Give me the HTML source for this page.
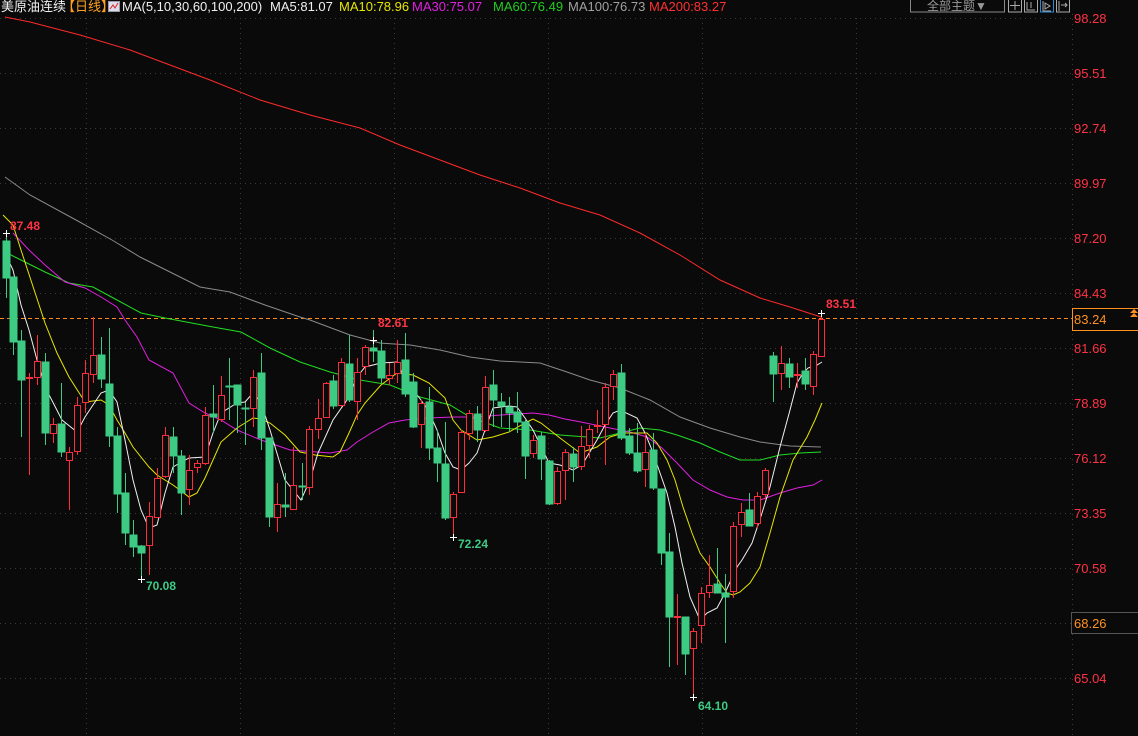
<!DOCTYPE html>
<html><head><meta charset="utf-8"><style>
html,body{margin:0;padding:0;background:#0a0a0a;width:1138px;height:736px;overflow:hidden}
svg{display:block}
text{font-family:"Liberation Sans","Noto Sans CJK SC",sans-serif}
</style></head><body>
<svg width="1138" height="736" viewBox="0 0 1138 736" xmlns="http://www.w3.org/2000/svg">
<rect width="1138" height="736" fill="#0a0a0a"/>
<g stroke="#3a3a3a" stroke-width="1" stroke-dasharray="1,4">
<path d="M0 18.5H1072M0 73.5H1072M0 128.5H1072M0 183.5H1072M0 238.5H1072M0 293.5H1072M0 348.5H1072M0 403.5H1072M0 458.5H1072M0 513.5H1072M0 568.5H1072M0 623.5H1072M0 678.5H1072"/>
<path d="M86.5 18V736M240.5 18V736M394.5 18V736M548.5 18V736M702.5 18V736M856.5 18V736M1072.5 14V736"/>
</g>
<path d="M0 318.5H1072" stroke="#ff8c1a" stroke-dasharray="4,3"/>
<g fill="none" stroke-width="1">
<polyline stroke="#ff2a2a" points="5,17 30,22 80,35 130,50 170,65 210,80 260,100 310,115 360,128 400,145 440,160 480,175 520,188 560,203 600,215 640,233 680,255 720,280 760,298 790,307 821,317"/>
<polyline stroke="#8a8a8a" points="5,177 30,195 76,220 112,240 140,257 170,272 200,287 230,292 265,305 300,317 310,320 350,335 380,343 410,345 440,350 470,357 500,361 540,363 567,372 590,380 620,388 650,400 680,417 710,428 740,437 760,442 790,446 821,447"/>
<polyline stroke="#22dd22" points="5,252 21,260 45,272 69,283 93,287 117,300 141,313 165,318 213,327 241,332 270,348 300,362 330,372 360,380 390,385 420,397 450,405 470,417 500,428 530,430 560,435 600,438 640,428 660,430 677,435 700,443 720,452 740,460 760,460 780,455 800,453 821,452"/>
<polyline stroke="#e020e0" points="13,233 29,250 45,265 65,282 85,288 101,297 117,307 125,320 137,337 149,360 173,373 189,403 205,413 221,420 237,430 261,440 290,450 330,453 347,450 357,442 373,432 389,423 405,420 429,418 453,417 477,417 501,415 517,414 533,413 549,415 565,419 581,422 605,427 630,432 647,437 662,448 677,463 693,480 710,490 727,497 743,500 760,500 780,493 797,488 813,485 822,480"/>
<polyline stroke="#e6e600" points="3,215 13,225 21,250 45,323 57,353 69,377 85,402 101,400 109,405 117,420 125,433 133,447 149,467 157,475 173,485 189,497 197,493 205,478 213,460 221,442 237,428 245,423 253,418 261,419 270,423 285,435 300,452 315,455 333,457 340,452 349,433 357,415 365,403 381,385 397,373 413,375 429,383 445,398 453,420 461,430 477,440 493,437 509,432 525,423 533,419 541,423 560,438 580,453 597,447 610,437 623,433 647,433 657,443 667,460 675,480 683,507 692,533 700,553 710,567 720,583 727,593 733,595 740,592 750,583 760,567 770,533 780,497 793,460 807,437 815,420 822,403"/>
<polyline stroke="#f0f0f0" points="5,253 13,270 21,305 29,330 37,360 45,387 62,420 77,432 85,417 101,393 109,390 117,402 125,440 133,480 141,510 149,528 157,525 165,493 173,467 189,458 205,457 213,433 221,413 237,403 245,402 253,393 261,403 270,430 285,480 301,500 310,480 318,453 333,420 349,397 357,377 365,367 381,363 397,362 405,380 413,390 421,400 429,412 437,430 445,453 453,467 461,470 469,463 477,453 485,430 493,408 509,406 517,407 525,418 533,430 549,463 560,465 573,470 582,465 597,440 605,425 613,413 620,410 637,418 645,433 652,450 660,473 667,493 675,527 682,563 690,597 700,620 707,613 717,608 725,593 737,567 742,560 752,543 762,513 770,487 780,447 790,410 797,383 803,373 808,368 817,365 822,362"/>
</g>
<g fill="#3dcb84" stroke="#3dcb84">
<path fill="none" d="M6.5 233V298M13.5 277V355M21.5 330V437M45.5 353V445M61.5 383V457M101.5 337V388M109.5 328V447M117.5 427V513M125.5 473V545M133.5 520V557M141.5 545V579M173.5 427V473M181.5 450V515M213.5 385V433M229.5 358V420M237.5 385V433M245.5 402V445M261.5 353V450M269.5 438V527M285.5 473V517M302.5 463V500M333.5 375V409M349.5 335V402M373.5 330V362M381.5 340V383M405.5 333V397M413.5 373V428M429.5 387V460M437.5 430V482M445.5 422V520M477.5 406V442M493.5 370V427M501.5 393V427M509.5 397V432M517.5 392V433M525.5 420V479M541.5 432V480M549.5 460V505M573.5 447V482M621.5 364V440M629.5 428V455M637.5 423V473M653.5 433V490M661.5 489V565M669.5 533V667M685.5 617V675M717.5 548V593M725.5 574V643M749.5 493V526M773.5 352V402M789.5 358V388M805.5 358V390"/>
<rect x="3" y="241" width="7" height="37"/><rect x="10" y="277" width="7" height="65"/><rect x="18" y="341" width="7" height="39"/><rect x="42" y="362" width="7" height="71"/><rect x="58" y="424" width="7" height="28"/><rect x="98" y="355" width="7" height="24"/><rect x="106" y="384" width="7" height="52"/><rect x="114" y="436" width="7" height="58"/><rect x="122" y="493" width="7" height="40"/><rect x="130" y="535" width="7" height="12"/><rect x="138" y="546" width="7" height="7"/><rect x="170" y="437" width="7" height="19"/><rect x="178" y="456" width="7" height="37"/><rect x="210" y="414" width="7" height="3"/><rect x="226" y="386" width="7" height="1"/><rect x="234" y="385" width="7" height="20"/><rect x="242" y="408" width="7" height="1"/><rect x="258" y="373" width="7" height="65"/><rect x="266" y="438" width="7" height="79"/><rect x="282" y="505" width="7" height="2"/><rect x="299" y="486" width="7" height="1"/><rect x="330" y="381" width="7" height="25"/><rect x="346" y="364" width="7" height="36"/><rect x="370" y="348" width="7" height="3"/><rect x="378" y="351" width="7" height="27"/><rect x="402" y="360" width="7" height="34"/><rect x="410" y="382" width="7" height="45"/><rect x="426" y="402" width="7" height="46"/><rect x="434" y="448" width="7" height="15"/><rect x="442" y="464" width="7" height="54"/><rect x="474" y="414" width="7" height="16"/><rect x="490" y="385" width="7" height="15"/><rect x="498" y="402" width="7" height="4"/><rect x="506" y="407" width="7" height="6"/><rect x="514" y="412" width="7" height="10"/><rect x="522" y="422" width="7" height="34"/><rect x="538" y="436" width="7" height="23"/><rect x="546" y="461" width="7" height="43"/><rect x="570" y="454" width="7" height="13"/><rect x="618" y="373" width="7" height="65"/><rect x="626" y="436" width="7" height="17"/><rect x="634" y="453" width="7" height="18"/><rect x="650" y="450" width="7" height="38"/><rect x="658" y="489" width="7" height="64"/><rect x="666" y="552" width="7" height="65"/><rect x="682" y="617" width="7" height="37"/><rect x="714" y="584" width="7" height="9"/><rect x="722" y="593" width="7" height="4"/><rect x="746" y="510" width="7" height="16"/><rect x="770" y="356" width="7" height="18"/><rect x="786" y="364" width="7" height="13"/><rect x="802" y="371" width="7" height="13"/>
</g>
<g fill="#0a0a0a" stroke="#ff2d3c">
<path fill="none" d="M29.5 373V475M37.5 335V385M53.5 418V443M69.5 447V510M77.5 397V455M85.5 360V413M93.5 317V383M149.5 502V575M157.5 468V518M165.5 427V478M189.5 455V505M197.5 460V473M205.5 407V465M221.5 376V422M253.5 370V427M277.5 483V532M293.5 447V510M309.5 426V495M318.5 399V439M326.5 382V418M341.5 358V407M357.5 358V420M365.5 345V375M389.5 363V385M397.5 340V383M421.5 400V448M453.5 492V537M461.5 430V493M469.5 410V440M485.5 376V432M533.5 435V458M557.5 467V505M565.5 449V500M581.5 426V470M589.5 425V458M597.5 410V433M605.5 383V465M613.5 370V400M645.5 433V487M677.5 594V665M693.5 628V697M701.5 587V643M709.5 555V598M733.5 522V598M741.5 503V537M757.5 492V528M765.5 468V500M781.5 346V390M797.5 363V388M813.5 351V395M821.5 313V357"/>
<rect x="26.5" y="377.5" width="6" height="1"/><rect x="34.5" y="361.5" width="6" height="16"/><rect x="50.5" y="424.5" width="6" height="9"/><rect x="66.5" y="452.5" width="6" height="8"/><rect x="74.5" y="405.5" width="6" height="46"/><rect x="82.5" y="373.5" width="6" height="29"/><rect x="90.5" y="355.5" width="6" height="19"/><rect x="146.5" y="516.5" width="6" height="29"/><rect x="154.5" y="478.5" width="6" height="39"/><rect x="162.5" y="435.5" width="6" height="41"/><rect x="186.5" y="470.5" width="6" height="19"/><rect x="194.5" y="463.5" width="6" height="4"/><rect x="202.5" y="415.5" width="6" height="48"/><rect x="218.5" y="395.5" width="6" height="24"/><rect x="250.5" y="377.5" width="6" height="31"/><rect x="274.5" y="504.5" width="6" height="13"/><rect x="290.5" y="485.5" width="6" height="24"/><rect x="306.5" y="429.5" width="6" height="58"/><rect x="315.5" y="418.5" width="6" height="11"/><rect x="323.5" y="383.5" width="6" height="34"/><rect x="338.5" y="362.5" width="6" height="43"/><rect x="354.5" y="372.5" width="6" height="29"/><rect x="362.5" y="347.5" width="6" height="19"/><rect x="386.5" y="375.5" width="6" height="3"/><rect x="394.5" y="362.5" width="6" height="11"/><rect x="418.5" y="403.5" width="6" height="21"/><rect x="450.5" y="494.5" width="6" height="23"/><rect x="458.5" y="432.5" width="6" height="60"/><rect x="466.5" y="413.5" width="6" height="20"/><rect x="482.5" y="387.5" width="6" height="43"/><rect x="530.5" y="440.5" width="6" height="13"/><rect x="554.5" y="471.5" width="6" height="32"/><rect x="562.5" y="452.5" width="6" height="18"/><rect x="578.5" y="446.5" width="6" height="20"/><rect x="586.5" y="429.5" width="6" height="16"/><rect x="594.5" y="425.5" width="6" height="1"/><rect x="602.5" y="387.5" width="6" height="37"/><rect x="610.5" y="374.5" width="6" height="12"/><rect x="642.5" y="452.5" width="6" height="17"/><rect x="674.5" y="616.5" width="6" height="1"/><rect x="690.5" y="631.5" width="6" height="17"/><rect x="698.5" y="593.5" width="6" height="32"/><rect x="706.5" y="585.5" width="6" height="7"/><rect x="730.5" y="526.5" width="6" height="65"/><rect x="738.5" y="512.5" width="6" height="12"/><rect x="754.5" y="496.5" width="6" height="27"/><rect x="762.5" y="470.5" width="6" height="24"/><rect x="778.5" y="363.5" width="6" height="10"/><rect x="794.5" y="374.5" width="6" height="1"/><rect x="810.5" y="354.5" width="6" height="32"/><rect x="818.5" y="319.5" width="6" height="37"/>
</g>
<g stroke="#fff" stroke-width="1">
<path d="M3 233.5H10M6.5 230V237M138 579.5H145M141.5 576V583M370 340.5H377M373.5 337V344M450 537.5H457M453.5 534V541M690 697.5H697M693.5 694V701M818 313.5H825M821.5 310V317"/>
</g>
<g font-size="12" font-weight="bold">
<text x="10" y="230" fill="#ff3344">87.48</text>
<text x="378" y="327" fill="#ff3344">82.61</text>
<text x="826" y="308" fill="#ff3344">83.51</text>
<text x="146" y="590" fill="#3dcb84">70.08</text>
<text x="458" y="548" fill="#3dcb84">72.24</text>
<text x="698" y="710" fill="#3dcb84">64.10</text>
</g>
<g font-size="13" fill="#ff3344">
<text x="1074" y="23">98.28</text><text x="1074" y="78">95.51</text><text x="1074" y="133">92.74</text><text x="1074" y="188">89.97</text><text x="1074" y="243">87.20</text><text x="1074" y="298">84.43</text><text x="1074" y="353">81.66</text><text x="1074" y="408">78.89</text><text x="1074" y="463">76.12</text><text x="1074" y="518">73.35</text><text x="1074" y="573">70.58</text><text x="1074" y="683">65.04</text>
</g>
<rect x="1072.5" y="308.5" width="66" height="22" fill="#0a0a0a" stroke="#ff9020"/>
<text x="1074" y="324" font-size="13" fill="#ff9020">83.24</text>
<path d="M1130 313L1134 309L1138 313ZM1130 317L1134 313L1138 317Z" fill="#ff9020"/>
<rect x="1071.5" y="612.5" width="67" height="21" fill="#0a0a0a" stroke="#555"/>
<text x="1074" y="628" font-size="13" fill="#ff9020">68.26</text>
<g font-size="13">
<text x="1" y="11" fill="#f0f0f0">美原油连续</text>
<text x="62" y="11" fill="#ffa020">【日线】</text>
<rect x="108.5" y="1.5" width="11" height="10" fill="#dde" stroke="#99a"/>
<path d="M110 9L113 5L115 8L118 3" stroke="#e02020" fill="none"/>
<text x="122" y="11" fill="#f0f0f0">MA(5,10,30,60,100,200)</text>
<text x="270" y="11" fill="#f0f0f0">MA5:81.07</text>
<text x="339" y="11" fill="#e6e600">MA10:78.96</text>
<text x="412" y="11" fill="#e020e0">MA30:75.07</text>
<text x="493" y="11" fill="#22cc22">MA60:76.49</text>
<text x="568" y="11" fill="#a0a0a0">MA100:76.73</text>
<text x="649" y="11" fill="#ff3030">MA200:83.27</text>
</g>
<rect x="910.5" y="-1" width="94" height="13" fill="none" stroke="#888"/>
<text x="927" y="10" font-size="12" fill="#999">全部主题▼</text>
<g fill="none" stroke="#aaa">
<rect x="1008.5" y="-1" width="13" height="13"/><rect x="1024.5" y="-1" width="13" height="13"/><rect x="1040.5" y="-1" width="13" height="13" stroke="#2a8ad8"/><rect x="1056.5" y="-1" width="13" height="13"/>
<path d="M1015 1V10M1010 5.5H1020M1027 2V10H1035M1031 2V8M1043 1V11H1051M1045 3L1050 6L1045 9ZM1059 1V11M1061 5H1067M1065 3L1067 5L1065 7"/>
</g>
</svg>
</body></html>
